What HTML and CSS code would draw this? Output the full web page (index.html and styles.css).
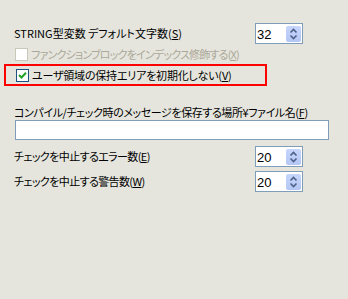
FILE: index.html
```html
<!DOCTYPE html>
<html lang="ja">
<head>
<meta charset="utf-8">
<link rel="stylesheet" href="styles.css">
</head>
<body>
<div class="panel">
  <div class="row row-spin first">
    <span class="label">STRING型変数 デフォルト文字数(<u>S</u>)</span>
    <div class="spin">
      <span class="val">32</span>
      <span class="btn"><svg width="15" height="16" viewBox="0 0 15 16"><path d="M4.5 6.5 L7.5 3.5 L10.5 6.5" fill="none" stroke="#4d6185" stroke-width="1.6"/><path d="M4.5 9.5 L7.5 12.5 L10.5 9.5" fill="none" stroke="#4d6185" stroke-width="1.6"/></svg></span>
    </div>
  </div>
  <div class="row check disabled">
    <span class="box"></span>
    <span class="label t-dis">ファンクションブロックをインデックス修飾する(<u>X</u>)</span>
  </div>
  <div class="highlight">
    <div class="row check">
      <span class="box on"><svg width="11" height="11" viewBox="0 0 11 11"><path d="M2 5 L4.5 7.5 L9 2.8" fill="none" stroke="#21a121" stroke-width="2"/></svg></span>
      <span class="label t-on">ユーザ領域の保持エリアを初期化しない(<u>V</u>)</span>
    </div>
  </div>
  <div class="field-label">コンパイル/チェック時のメッセージを保存する場所¥ファイル名(<u>F</u>)</div>
  <div class="field"></div>
  <div class="row row-spin err">
    <span class="label t-cnt">チェックを中止するエラー数(<u>E</u>)</span>
    <div class="spin">
      <span class="val">20</span>
      <span class="btn"><svg width="15" height="16" viewBox="0 0 15 16"><path d="M4.5 6.5 L7.5 3.5 L10.5 6.5" fill="none" stroke="#4d6185" stroke-width="1.6"/><path d="M4.5 9.5 L7.5 12.5 L10.5 9.5" fill="none" stroke="#4d6185" stroke-width="1.6"/></svg></span>
    </div>
  </div>
  <div class="row row-spin warn">
    <span class="label t-cnt">チェックを中止する警告数(<u>W</u>)</span>
    <div class="spin">
      <span class="val">20</span>
      <span class="btn"><svg width="15" height="16" viewBox="0 0 15 16"><path d="M4.5 6.5 L7.5 3.5 L10.5 6.5" fill="none" stroke="#4d6185" stroke-width="1.6"/><path d="M4.5 9.5 L7.5 12.5 L10.5 9.5" fill="none" stroke="#4d6185" stroke-width="1.6"/></svg></span>
    </div>
  </div>
</div>
</body>
</html>
```
FILE: styles.css
```css
html, body {
  margin: 0;
  padding: 0;
  background: #e5e5dd;
  width: 348px;
  height: 299px;
  overflow: hidden;
}
.panel {
  padding: 23px 0 0 14px;
  font-family: "Noto Sans CJK JP", "Noto Sans", sans-serif;
  font-size: 11px;
  font-feature-settings: "palt";
  color: #000;
  display: flex;
  flex-direction: column;
  align-items: flex-start;
}
u { text-decoration-thickness: 1px; text-underline-offset: 1px; }
.row {
  display: flex;
  align-items: center;
  line-height: 13px;
}
.row-spin {
  width: 289px;
  justify-content: space-between;
  height: 21px;
}
.t-dis { letter-spacing: -0.8px; }
.t-on { letter-spacing: -0.2px; }
.t-cnt { letter-spacing: -0.6px; }
.spin {
  box-sizing: border-box;
  width: 48px;
  height: 21px;
  border: 1px solid #7f9db9;
  background: #fff;
  display: flex;
  align-items: center;
  justify-content: space-between;
  padding: 0 1px 0 1px;
}
.val {
  font-family: "Liberation Sans", sans-serif;
  font-size: 13px;
  line-height: 13px;
  padding-top: 1px;
}
.btn {
  display: block;
  width: 15px;
  height: 16px;
  border-radius: 2px;
  background: linear-gradient(#c6d5fc, #b4c6f4);
}
.btn svg { display: block; }
.check { margin-left: 1px; }
.check .box {
  box-sizing: border-box;
  width: 13px;
  height: 13px;
  border: 1px solid #1c5180;
  background: #fff;
  margin-right: 3px;
  display: flex;
  align-items: center;
  justify-content: center;
}
.check.disabled { margin-top: 4px; }
.check.disabled .box { border-color: #cac8bb; background: #fff; }
.check.disabled .label { color: #aca899; }
.highlight {
  box-sizing: border-box;
  margin: 3px 0 0 -10px;
  width: 263px;
  height: 22px;
  border: 2px solid #f00;
  padding: 3px 0 0 9px;
}
.field-label {
  margin-top: 19px;
  line-height: 15px;
  height: 15px;
  letter-spacing: -0.4px;
}
.field {
  box-sizing: border-box;
  margin: 0 0 0 1px;
  width: 314px;
  height: 20px;
  border: 1px solid #7f9db9;
  background: #fff;
}
.err { margin-top: 6px; }
.warn { margin-top: 4px; }
```
